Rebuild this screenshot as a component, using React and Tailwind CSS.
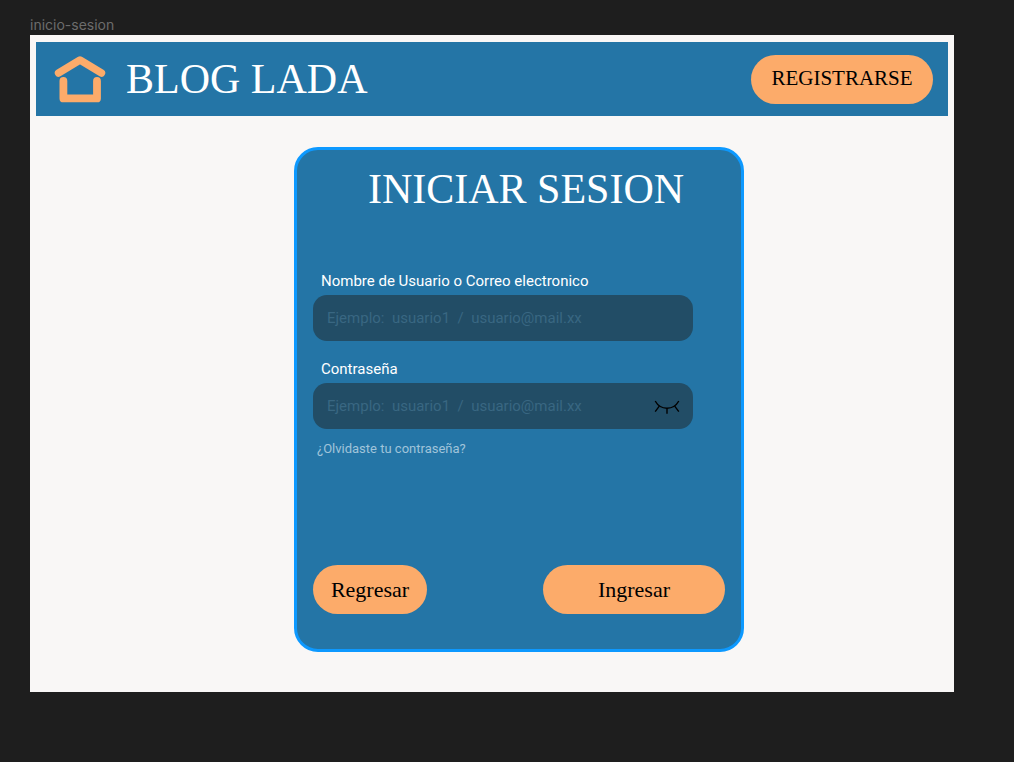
function HomeIcon() {
  return (
    <svg className="h-12 w-[52px] text-[#fcab6a]" viewBox="0 0 52 48" fill="none" stroke="currentColor" strokeLinecap="round" strokeLinejoin="round" aria-hidden="true">
      <path d="M4.5 18 26 5 47.5 18" strokeWidth="7.4" />
      <path d="M9.4 26V43.4H43V26" strokeWidth="7.8" />
    </svg>
  );
}

function ClosedEyeIcon() {
  return (
    <svg className="h-4 w-[26px]" viewBox="0 0 26 16" fill="none" stroke="currentColor" strokeWidth="1.4" aria-hidden="true">
      <path d="M1.2 3C6.5 12.6 19.5 12.6 24.8 3" />
      <path d="M5.3 8.2 1.2 13.6M13 10.4V15.8M20.7 8.2l4.1 5.4" />
    </svg>
  );
}

const pill = "flex h-[49px] items-center justify-center rounded-full bg-[#fcab6a] text-black";
const field =
  "h-[46px] w-full rounded-[14px] bg-[#224d66] pl-[14px] pr-12 text-[15px] text-white outline-none placeholder:text-[#396782]";

export default function App() {
  return (
    <div className="min-h-screen bg-[#1e1e1e] pb-[70px] pl-[30px] pr-[60px] pt-4 font-['Roboto',sans-serif]">
      <p className="h-[19px] font-['Inter',sans-serif] text-sm leading-[18px] text-[#6c6c6c]">inicio-sesion</p>

      <div className="bg-[#f9f7f6] px-[6px] pb-10 pt-[7px]">
        <header className="flex min-h-[74px] items-center justify-between bg-[#2475a6] pl-[18px] pr-[15px] font-['Liberation_Serif',serif]">
          <a href="#inicio" className="flex items-center gap-5 text-white">
            <HomeIcon />
            <span className="text-[42px] leading-[48px]">BLOG LADA</span>
          </a>
          <button type="button" className={pill + " w-[182px] text-[21px]"}>
            REGISTRARSE
          </button>
        </header>

        <main className="flex justify-center pl-[54px] pt-[31px]">
          <form
            className="flex min-h-[505px] w-full max-w-[450px] flex-col rounded-[24px] border-[3px] border-[#0d99ff] bg-[#2475a6] px-4 pb-[35px] pt-[15px]"
            onSubmit={(e) => e.preventDefault()}
          >
            <h1 className="pl-[14px] text-center font-['Liberation_Serif',serif] text-[42px] leading-[48px] text-white">
              INICIAR SESION
            </h1>

            <div className="mt-[58px] w-full max-w-[380px]">
              <label htmlFor="usuario" className="block h-6 pl-2 text-[15px] leading-5 text-white">
                Nombre de Usuario o Correo electronico
              </label>
              <input id="usuario" type="text" placeholder="Ejemplo:  usuario1  /  usuario@mail.xx" className={field} />

              <label htmlFor="clave" className="mt-[18px] block h-6 pl-2 text-[15px] leading-5 text-white">
                Contraseña
              </label>
              <div className="relative">
                <input id="clave" type="password" placeholder="Ejemplo:  usuario1  /  usuario@mail.xx" className={field} />
                <button type="button" aria-label="Mostrar contraseña" className="absolute inset-y-0 right-[13px] flex items-center text-black">
                  <ClosedEyeIcon />
                </button>
              </div>

              <a href="#recuperar" className="mt-[10px] block pl-1 text-[13px] leading-5 text-[#a0c4da]">
                ¿Olvidaste tu contraseña?
              </a>
            </div>

            <div className="mt-auto flex items-center justify-between font-['Liberation_Serif',serif] text-[22px]">
              <button type="button" className={pill + " w-[114px]"}>
                Regresar
              </button>
              <button type="submit" className={pill + " w-[182px]"}>
                Ingresar
              </button>
            </div>
          </form>
        </main>
      </div>
    </div>
  );
}
